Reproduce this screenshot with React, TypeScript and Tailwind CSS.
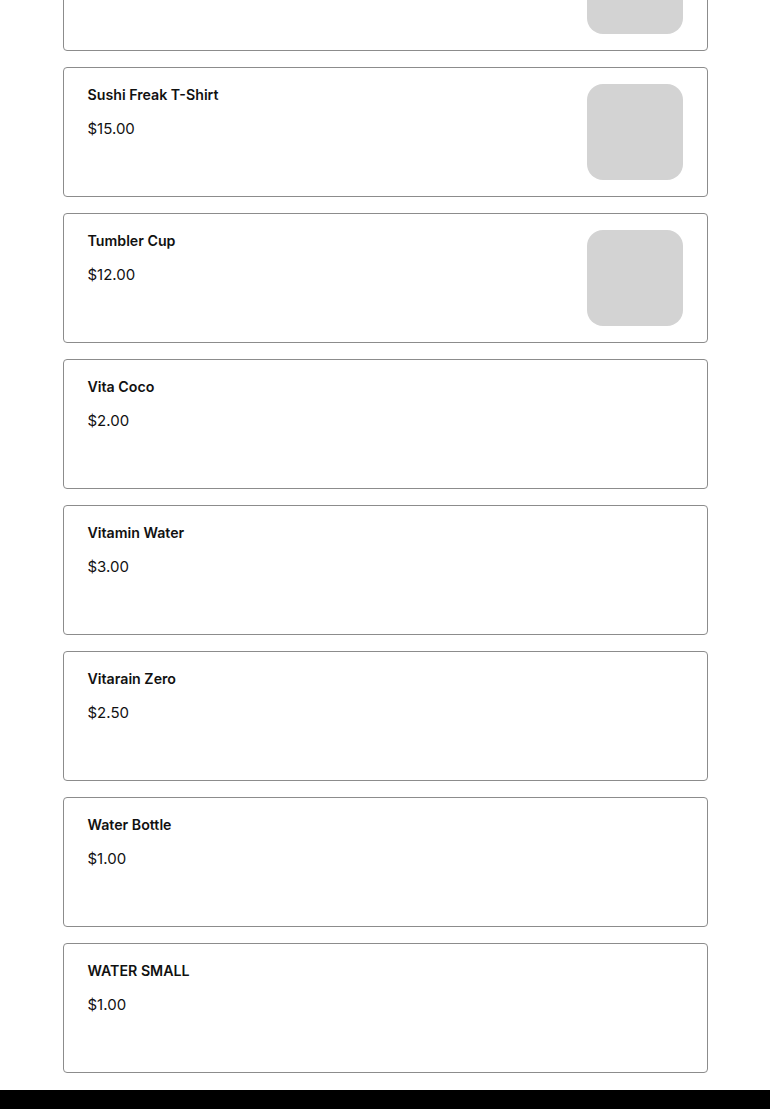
const items = [
  { name: "", price: "", image: true },
  { name: "Sushi Freak T-Shirt", price: "$15.00", image: true },
  { name: "Tumbler Cup", price: "$12.00", image: true },
  { name: "Vita Coco", price: "$2.00", image: false },
  { name: "Vitamin Water", price: "$3.00", image: false },
  { name: "Vitarain Zero", price: "$2.50", image: false },
  { name: "Water Bottle", price: "$1.00", image: false },
  { name: "WATER SMALL", price: "$1.00", image: false },
];

export default function App() {
  return (
    <div className="min-h-screen bg-white text-[#111] overflow-hidden" style={{ fontFamily: "Inter, 'Noto Sans', sans-serif" }}>
      <div className="mx-auto mt-[-79px] flex w-[645px] flex-col gap-4 pb-[17px]">
        {items.map((item, i) => (
          <div
            key={i}
            className="flex h-[130px] items-start justify-between rounded border border-[#8c8c8c] px-6 py-4"
          >
            <div className="mt-px flex flex-col">
              <div className="text-[14.2px] font-semibold leading-5">{item.name}</div>
              <div className="mt-[14px] text-[15px] leading-5">{item.price}</div>
            </div>
            {item.image && <div className="h-24 w-24 shrink-0 rounded-2xl bg-[#d3d3d3]" />}
          </div>
        ))}
      </div>
      <div className="h-[60px] bg-black" />
    </div>
  );
}
